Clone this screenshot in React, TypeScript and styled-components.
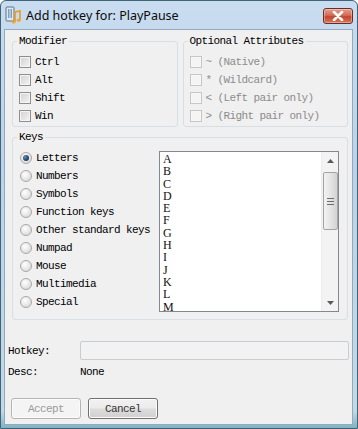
import React from "react";
import styled, { createGlobalStyle } from "styled-components";

const GlobalStyle = createGlobalStyle`
  html, body {
    margin: 0;
    padding: 0;
    background: #ffffff;
  }
  * {
    box-sizing: border-box;
  }
`;

const Window = styled.div`
  width: 358px;
  height: 429px;
  display: flex;
  flex-direction: column;
  border: 1px solid #3f6478;
  border-radius: 6px 6px 0 0;
  background: linear-gradient(180deg, #c9dcf0 0%, #bcd2ea 40%, #c2d9e8 96%, #7fb3c2 100%);
  overflow: hidden;
`;

const TitleBar = styled.div`
  height: 28px;
  display: flex;
  align-items: center;
  padding: 0 4px 0 4px;
  gap: 4px;
`;

const Title = styled.div`
  flex: 1;
  font-family: "Noto Sans", "Open Sans", sans-serif;
  font-size: 12.5px;
  color: #0b0b0b;
  padding-left: 1px;
  padding-top: 1px;
`;

const CloseButton = styled.div`
  width: 30px;
  height: 16px;
  margin-top: 1px;
  border: 1px solid #6b2b22;
  border-radius: 3px;
  background: linear-gradient(180deg, #e3a08f 0%, #d36c55 45%, #c4452d 55%, #d6785f 100%);
  display: flex;
  align-items: center;
  justify-content: center;
  box-shadow: inset 0 0 0 1px rgba(255, 255, 255, 0.35);
`;

const Client = styled.div`
  flex: 1;
  margin: 0 4px 3px 3px;
  border: 1px solid #93a9bd;
  background: #f0f0f0;
  display: flex;
  flex-direction: column;
  font-family: "Liberation Mono", "DejaVu Sans Mono", monospace;
  font-size: 11px;
  letter-spacing: -0.6px;
  color: #000000;
`;

const GroupArea = styled.div`
  padding: 11px 4px 0 7px;
  display: flex;
  flex-direction: column;
`;

const GroupRow = styled.div`
  display: flex;
  gap: 5px;
`;

const GroupBox = styled.div<{ $bottom?: number; $top?: number }>`
  flex: 1;
  margin-top: ${(p) => p.$top ?? 0}px;
  border: 1px solid #d5dfe5;
  border-radius: 3px;
  padding: 0 6px ${(p) => p.$bottom ?? 1}px 6px;
  display: flex;
  flex-direction: column;
`;

const Caption = styled.div`
  width: fit-content;
  height: 13px;
  line-height: 13px;
  margin: -7px 0 0 -2px;
  padding: 0 2px;
  background: #f0f0f0;
`;

const OptionList = styled.div`
  margin-top: 5px;
  display: flex;
  flex-direction: column;
`;

const OptionRow = styled.div<{ $disabled?: boolean }>`
  height: 18px;
  display: flex;
  align-items: center;
  gap: 4px;
  color: ${(p) => (p.$disabled ? "#8c8c8c" : "#000000")};
  white-space: pre;
`;

const Check = styled.span<{ $disabled?: boolean }>`
  width: 12px;
  height: 12px;
  flex: none;
  border: 1px solid ${(p) => (p.$disabled ? "#c4c6c8" : "#8e8f8f")};
  background: ${(p) =>
    p.$disabled ? "#f4f4f4" : "linear-gradient(135deg, #d2d2d2 0%, #e6e6e6 60%, #f6f6f6 100%)"};
  box-shadow: inset 0 0 0 1px ${(p) => (p.$disabled ? "#f7f7f7" : "#f4f4f4")};
`;

const Radio = styled.span<{ $checked?: boolean }>`
  width: 12px;
  height: 12px;
  flex: none;
  border-radius: 50%;
  border: 1px solid #a6a8aa;
  background: radial-gradient(circle at 40% 35%, #ffffff 0%, #e6e6e6 55%, #cfcfcf 100%);
  display: flex;
  align-items: center;
  justify-content: center;
  margin-left: 1px;
  &::after {
    content: "";
    display: ${(p) => (p.$checked ? "block" : "none")};
    width: 6px;
    height: 6px;
    border-radius: 50%;
    background: radial-gradient(circle at 35% 35%, #6d8fb3 0%, #2a4c74 50%, #122a45 100%);
  }
`;

const KeysBody = styled.div`
  display: flex;
  margin-top: 5px;
`;

const KeyTypes = styled.div`
  width: 140px;
  display: flex;
  flex-direction: column;
`;

const ListBox = styled.div`
  margin-top: 2px;
  width: 180px;
  height: 161px;
  border: 1px solid #828790;
  background: #ffffff;
  display: flex;
`;

const ListItems = styled.div`
  flex: 1;
  padding: 1px 0 0 3px;
  font-family: "Liberation Serif", "DejaVu Serif", serif;
  font-size: 12px;
  letter-spacing: 0;
  line-height: 12.3px;
  color: #111;
`;

const ScrollBar = styled.div`
  width: 17px;
  display: flex;
  flex-direction: column;
  background: #f3f3f3;
  border-left: 1px solid #ececec;
`;

const ScrollArrow = styled.div`
  height: 17px;
  display: flex;
  align-items: center;
  justify-content: center;
`;

const Track = styled.div`
  flex: 1;
  padding-top: 3px;
`;

const Thumb = styled.div`
  width: 15px;
  height: 58px;
  margin-left: 1px;
  border: 1px solid #a2a4a6;
  border-radius: 2px;
  background: linear-gradient(90deg, #f2f2f2 0%, #e4e4e4 50%, #d3d3d3 100%);
  display: flex;
  flex-direction: column;
  align-items: center;
  justify-content: center;
  gap: 2px;
`;

const Grip = styled.span`
  width: 7px;
  height: 1px;
  background: #6d6d6d;
`;

const FormArea = styled.div`
  padding: 21px 3px 0 3px;
  display: flex;
  flex-direction: column;
`;

const FieldRow = styled.div<{ $gap?: number; $height: number }>`
  margin-top: ${(p) => p.$gap ?? 0}px;
  height: ${(p) => p.$height}px;
  display: flex;
  align-items: center;
`;

const FieldLabel = styled.div`
  width: 72px;
  flex: none;
`;

const TextBox = styled.div`
  flex: 1;
  height: 19px;
  border: 1px solid #c9ccd0;
  border-radius: 2px;
  background: #f2f2f2;
`;

const ButtonRow = styled.div`
  margin-top: 19px;
  padding-left: 3px;
  display: flex;
  gap: 7px;
`;

const Button = styled.div<{ $disabled?: boolean }>`
  width: 70px;
  height: 21px;
  border: 1px solid ${(p) => (p.$disabled ? "#b5b5b5" : "#707070")};
  border-radius: 3px;
  background: ${(p) =>
    p.$disabled
      ? "#f4f4f4"
      : "linear-gradient(180deg, #f2f2f2 0%, #ebebeb 48%, #dddddd 52%, #cfcfcf 100%)"};
  box-shadow: inset 0 0 0 1px ${(p) => (p.$disabled ? "#fbfbfb" : "#fcfcfc")};
  color: ${(p) => (p.$disabled ? "#9a9a9a" : "#333333")};
  display: flex;
  align-items: center;
  justify-content: center;
`;

const AppIcon = () => (
  <svg width="16" height="18" viewBox="0 0 16 18">
    <rect x="1" y="1" width="8" height="14" rx="1" fill="#dfe8ef" stroke="#5b7387" />
    <rect x="3" y="3" width="1.5" height="9" fill="#7fa0b8" />
    <rect x="5.5" y="3" width="1.5" height="9" fill="#7fa0b8" />
    <path d="M10 6 L15 5 L15 14" stroke="#e69b1c" strokeWidth="1.6" fill="none" />
    <path d="M10 6 L10 16" stroke="#e69b1c" strokeWidth="1.6" />
    <ellipse cx="8.6" cy="16" rx="2" ry="1.5" fill="#f2a623" />
    <ellipse cx="13.6" cy="14.2" rx="2" ry="1.5" fill="#f2a623" />
  </svg>
);

const CloseGlyph = () => (
  <svg width="12" height="10" viewBox="0 0 12 10">
    <path d="M2 1 L10 9 M10 1 L2 9" stroke="#ffffff" strokeWidth="2.6" strokeLinecap="round" />
  </svg>
);

const Triangle = ({ down }: { down?: boolean }) => (
  <svg width="7" height="4" viewBox="0 0 7 4">
    <path d={down ? "M0 0 L7 0 L3.5 4 Z" : "M0 4 L7 4 L3.5 0 Z"} fill="#5a5a5a" />
  </svg>
);

const modifiers = ["Ctrl", "Alt", "Shift", "Win"];
const attributes = [
  ["~", "(Native)"],
  ["*", "(Wildcard)"],
  ["<", "(Left pair only)"],
  [">", "(Right pair only)"],
];
const keyTypes = [
  "Letters",
  "Numbers",
  "Symbols",
  "Function keys",
  "Other standard keys",
  "Numpad",
  "Mouse",
  "Multimedia",
  "Special",
];
// only the rows that fit in the visible list
const letters = "ABCDEFGHIJKLM".split("");

const App: React.FC = () => {
  return (
    <>
      <GlobalStyle />
      <Window>
        <TitleBar>
          <AppIcon />
          <Title>Add hotkey for: PlayPause</Title>
          <CloseButton>
            <CloseGlyph />
          </CloseButton>
        </TitleBar>
        <Client>
          <GroupArea>
            <GroupRow>
              <GroupBox>
                <Caption>Modifier</Caption>
                <OptionList>
                  {modifiers.map((m) => (
                    <OptionRow key={m}>
                      <Check />
                      {m}
                    </OptionRow>
                  ))}
                </OptionList>
              </GroupBox>
              <GroupBox>
                <Caption>Optional Attributes</Caption>
                <OptionList>
                  {attributes.map(([sym, label]) => (
                    <OptionRow key={label} $disabled>
                      <Check $disabled />
                      {sym + " " + label}
                    </OptionRow>
                  ))}
                </OptionList>
              </GroupBox>
            </GroupRow>
            <GroupBox $top={10} $bottom={7}>
              <Caption>Keys</Caption>
              <KeysBody>
                <KeyTypes>
                  {keyTypes.map((k, i) => (
                    <OptionRow key={k}>
                      <Radio $checked={i === 0} />
                      {k}
                    </OptionRow>
                  ))}
                </KeyTypes>
                <ListBox>
                  <ListItems>
                    {letters.map((l) => (
                      <div key={l}>{l}</div>
                    ))}
                  </ListItems>
                  <ScrollBar>
                    <ScrollArrow>
                      <Triangle />
                    </ScrollArrow>
                    <Track>
                      <Thumb>
                        <Grip />
                        <Grip />
                        <Grip />
                      </Thumb>
                    </Track>
                    <ScrollArrow>
                      <Triangle down />
                    </ScrollArrow>
                  </ScrollBar>
                </ListBox>
              </KeysBody>
            </GroupBox>
          </GroupArea>
          <FormArea>
            <FieldRow $height={19}>
              <FieldLabel>Hotkey:</FieldLabel>
              <TextBox />
            </FieldRow>
            <FieldRow $gap={5} $height={14}>
              <FieldLabel>Desc:</FieldLabel>
              None
            </FieldRow>
            <ButtonRow>
              <Button $disabled>Accept</Button>
              <Button>Cancel</Button>
            </ButtonRow>
          </FormArea>
        </Client>
      </Window>
    </>
  );
};

export default App;
